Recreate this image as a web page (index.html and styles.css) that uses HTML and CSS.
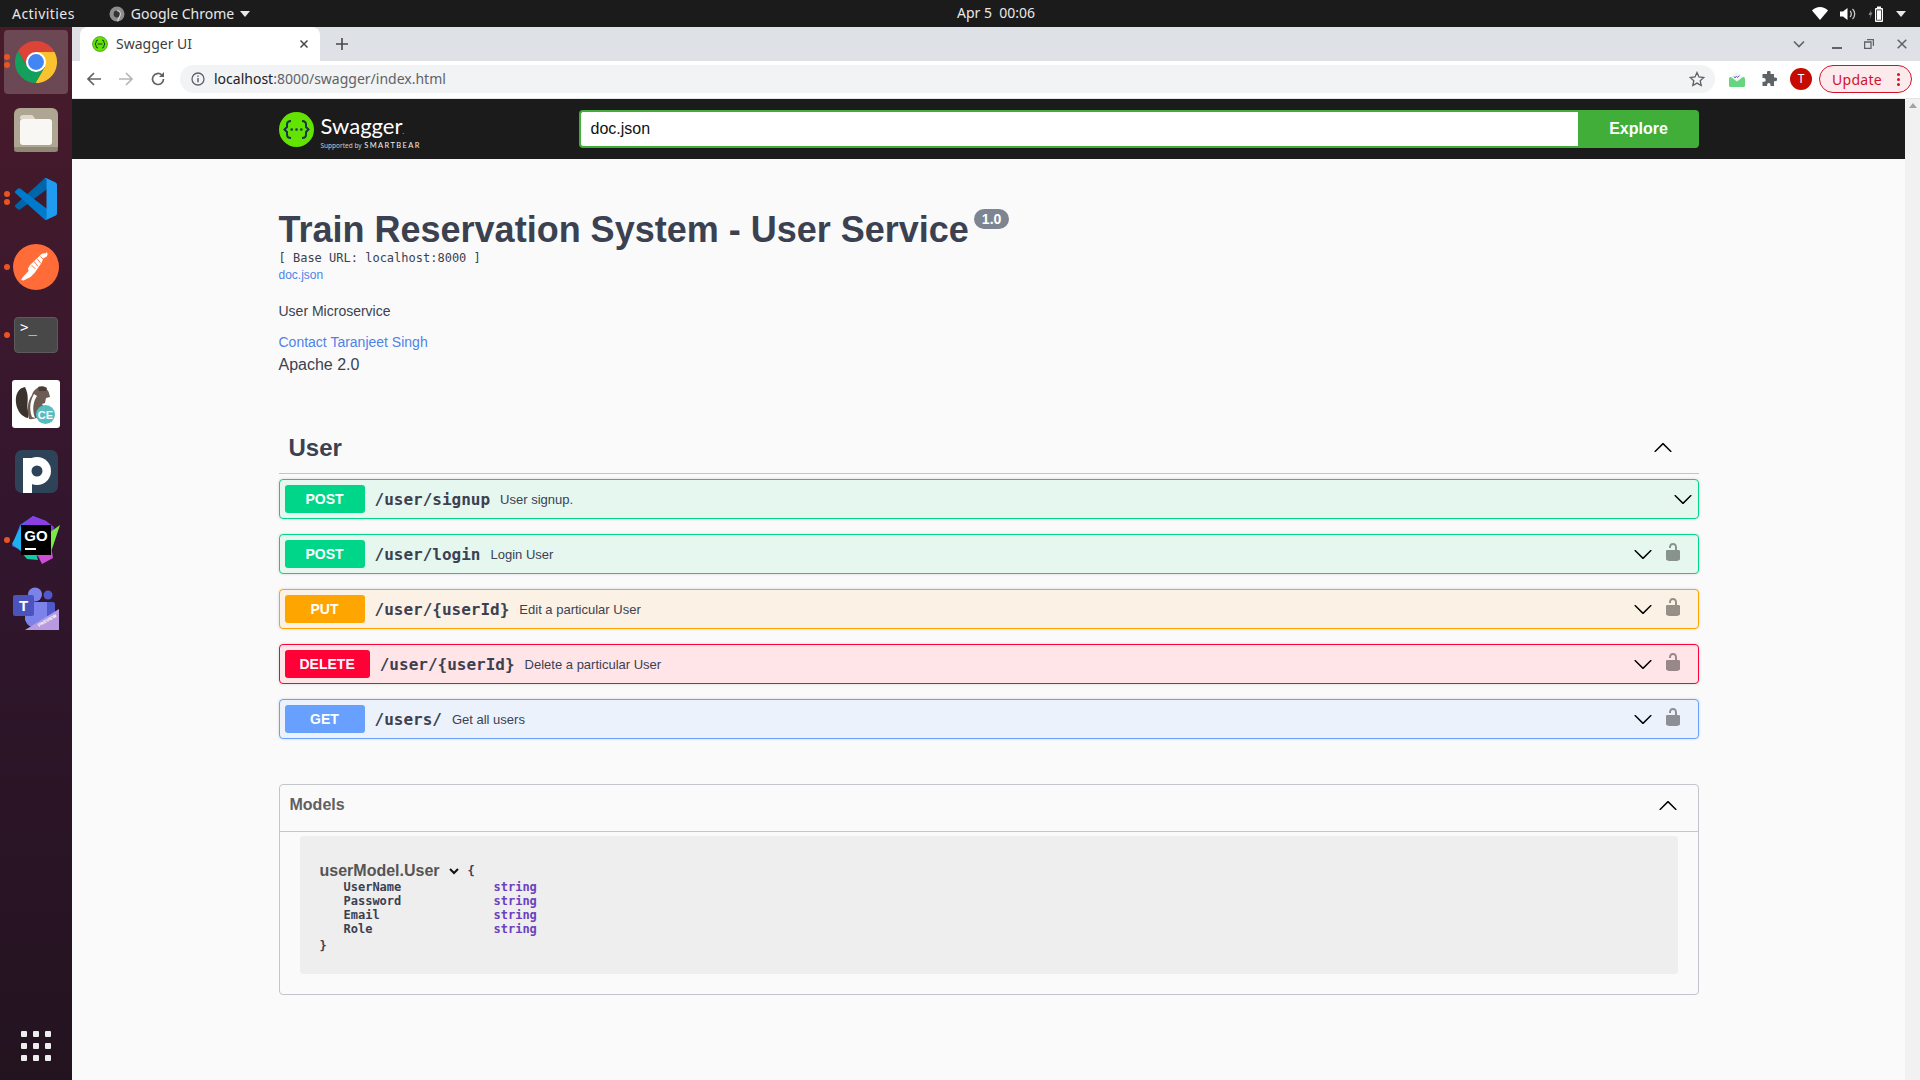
FILE: index.html
```html
<!DOCTYPE html>
<html lang="en">
<head>
  <meta charset="UTF-8">
  <meta name="viewport" content="width=device-width, initial-scale=1.0">
  <title>Swagger UI</title>
  <link rel="stylesheet" href="styles.css">
</head>
<body>
  <div class="gnome-bar">
    <div class="gnome-left">
      <span class="activities">Activities</span>
      <span class="app-menu">
        <svg width="16" height="16" viewBox="0 0 16 16"><circle cx="8" cy="8" r="7.500" fill="#8d8d8d"/><circle cx="8" cy="8" r="3.400" fill="#333"/><path d="M8 4.600A3.400 3.400 0 0 1 11 9.600L8.500 15.200" fill="none" stroke="#d5d5d5" stroke-width="1.200"/></svg>
        <span>Google Chrome</span>
        <i class="tri"></i>
      </span>
    </div>
    <div class="gnome-clock">Apr 5&nbsp; 00:06</div>
    <div class="gnome-right">
      <svg width="16" height="13" viewBox="0 0 16 13"><path d="M0 3.600C2 1.400 5 0 8 0s6 1.400 8 3.600L8 13z" fill="#fff"/></svg>
      <svg width="16" height="14" viewBox="0 0 16 14"><path d="M0 4.500h3L7.500 1v12L3 9.500H0z" fill="#fff"/><path d="M10 4c1 .8 1.300 1.800 1.300 3s-.3 2.200-1.300 3M12.500 2c1.500 1.300 2.200 3 2.200 5s-.7 3.700-2.200 5" fill="none" stroke="#ccc" stroke-width="1.300"/></svg>
      <svg width="16" height="16" viewBox="0 0 16 16"><path d="M3.500 3 .5 9h2L1.500 13l3-6.500h-2z" fill="#888"/><rect x="7" y="2" width="8" height="14" rx="1" fill="#fff"/><rect x="8.200" y="3.500" width="5.600" height="11" fill="#1b1b1b"/><rect x="9" y="4.300" width="4" height="9.500" fill="#fff"/><rect x="9" y="0.500" width="4" height="2" fill="#fff"/></svg>
      <i class="tri"></i>
    </div>
  </div>

  <div class="desktop">
    <nav class="dock">
      <div class="dock-slot is-active">
        <i class="dots two"></i>
        <svg width="46" height="46" viewBox="0 0 48 48">
          <path d="M5.260 12.540A22 22 0 0 1 43.300 13.500H24L14.910 29.250z" fill="#db4437"/>
          <path d="M43.300 13.500A22 22 0 0 1 23.440 45.970L33.090 29.250 24 13.500z" fill="#f9c22e"/>
          <path d="M23.440 45.970A22 22 0 0 1 5.260 12.540L14.910 29.250H33.090z" fill="#12a05c"/>
          <circle cx="24" cy="24" r="10.500" fill="#fff"/><circle cx="24" cy="24" r="8.300" fill="#4285f4"/>
        </svg>
      </div>
      <div class="dock-slot">
        <svg width="44" height="44" viewBox="0 0 44 44">
          <rect width="44" height="44" rx="6" fill="#aea692"/>
          <rect x="0" y="39" width="44" height="5" rx="3" fill="#8f8874"/>
          <path d="M6 10q0-3 3-3h8q2 0 3 2l1 2h-15z" fill="#ddd9cd"/>
          <rect x="6" y="11" width="32" height="26" rx="3" fill="#f8f7f3"/>
        </svg>
      </div>
      <div class="dock-slot">
        <i class="dots two"></i>
        <svg width="42" height="42" viewBox="0 0 100 100">
          <path d="M96.500 10.800 75.900.9a6.200 6.200 0 0 0-7.100 1.200L1.400 63.500a4.200 4.200 0 0 0 0 6.200l5.400 4.900a4.200 4.200 0 0 0 5.300.2L93.200 13.400c2.700-2.100 6.800-.2 6.800 3.300v-.2a6.200 6.200 0 0 0-3.500-5.700z" fill="#0065a9"/>
          <path d="M96.500 89.200 75.900 99.100a6.200 6.200 0 0 1-7.100-1.200L1.400 36.500a4.200 4.200 0 0 1 0-6.200l5.400-4.900a4.200 4.200 0 0 1 5.300-.2l81.100 61.400c2.700 2.100 6.800.2 6.800-3.300v.2a6.200 6.200 0 0 1-3.500 5.700z" fill="#007acc"/>
          <path d="M75.900 99.100a6.200 6.200 0 0 1-7.100-1.200c2.300 2.300 6.200.7 6.200-2.600V4.700c0-3.300-3.900-4.900-6.200-2.600a6.200 6.200 0 0 1 7.100-1.200l20.600 9.900a6.200 6.200 0 0 1 3.500 5.600v67.200a6.200 6.200 0 0 1-3.500 5.600z" fill="#1f9cf0"/>
        </svg>
      </div>
      <div class="dock-slot">
        <i class="dots"></i>
        <svg width="46" height="46" viewBox="0 0 46 46">
          <circle cx="23" cy="23" r="23" fill="#ff6c37"/>
          <path d="M33 9.500c-3-1-5 .5-6.500 2.500L17 21l-2 3.500.5 2.500-6 6.500-1.500 2.500 2.500.5 7-3.500 4-4 7-10 2-5c2.500-.5 4-1.500 4-3.500s-.5-2.300-1.500-2z" fill="#fff"/>
          <path d="M27.500 12.500l5 5M24 14.500l4 5M21 17.500l4 5M18.500 21l4 4" stroke="#ff6c37" stroke-width=".9"/>
        </svg>
      </div>
      <div class="dock-slot">
        <i class="dots"></i>
        <div class="term-icon"><span>&gt;_</span></div>
      </div>
      <div class="dock-slot">
        <svg width="48" height="48" viewBox="0 0 48 48">
          <rect width="48" height="48" rx="3" fill="#fff"/>
          <path d="M13 7C6 8 3 15 4 23s6 14 12 15c1-3 0-6-.5-10-.5-6 2-12-2.500-21z" fill="#3b322e"/>
          <path d="M17 39c-2-8-2-17 3-24 1-4 4-7 8-8 4 0 8 2 9 6l1 4-4 1-1 5-3 1c2 2 3 5 2 9-1 3-10 7-15 6z" fill="#6d5c54"/>
          <path d="M22 14c-4 7-5 15-2 23l3 1c-3-8-2-16 2-22z" fill="#fff"/>
          <path d="M26 7c3-1 6-1 9 1l-1 3-7 0z" fill="#4a3d38"/>
          <circle cx="33.500" cy="34.500" r="9.500" fill="#55bcc0"/>
          <text x="33.500" y="38.500" class="ce-text">CE</text>
        </svg>
      </div>
      <div class="dock-slot">
        <svg width="43" height="43" viewBox="0 0 43 43">
          <rect width="43" height="43" rx="7" fill="#2e4358"/>
          <rect x="8" y="8" width="9" height="35" fill="#fff"/>
          <circle cx="22" cy="21" r="14" fill="#fff"/>
          <circle cx="22" cy="21" r="5.500" fill="#2e4358"/>
        </svg>
      </div>
      <div class="dock-slot">
        <i class="dots"></i>
        <svg width="48" height="48" viewBox="0 0 48 48">
          <path d="M8 9 21 0l13 5 7 13-4 22-14 0L0 30z" fill="#3f6df0"/>
          <path d="M12 8 21 0l13 5 8 6-4 20-18-14z" fill="#8b3fe0"/>
          <path d="M48 9 39 36 30 22z" fill="#7be84a"/>
          <path d="M0 28 9 10l6 30z" fill="#1fb0f0"/>
          <path d="M24 36l15-6 2 12-11 6z" fill="#d04dd8"/>
          <path d="M9 36l14-2 3 10-11-1z" fill="#16c9a0"/>
          <rect x="9" y="9" width="30" height="30" fill="#000"/>
          <text x="24" y="24.500" class="go-text">GO</text>
          <rect x="13" y="32" width="11" height="2" fill="#fff"/>
        </svg>
      </div>
      <div class="dock-slot">
        <svg width="46" height="43" viewBox="0 0 46 43">
          <circle cx="22" cy="7.500" r="7" fill="#7b83eb"/>
          <circle cx="35" cy="8" r="4.500" fill="#5059c9"/>
          <path d="M30 15h10q2 0 2 2v12q0 6-6 6h-6z" fill="#5059c9"/>
          <path d="M12 15h22v16q0 10-10 10-9 0-12-8z" fill="#7b83eb"/>
          <rect y="8" width="21" height="21" rx="2" fill="#4b53bc"/>
          <text x="10.500" y="24" class="teams-text">T</text>
          <path d="M12 43 46 22v21z" fill="#b79ae0"/>
          <text x="26" y="40" class="preview-text" transform="rotate(-30 26 40)">PREVIEW</text>
        </svg>
      </div>
      <div class="dock-grid">
        <i></i><i></i><i></i><i></i><i></i><i></i><i></i><i></i><i></i>
      </div>
    </nav>

    <div class="browser">
      <div class="tab-strip">
        <div class="tab">
          <svg width="16" height="16" viewBox="0 0 16 16"><circle cx="8" cy="8" r="7.500" fill="#62e400" stroke="#2f7d1a" stroke-width=".6"/><path d="M6 4Q4 4 4 6v1L3 8l1 1v1q0 2 2 2M10 4q2 0 2 2v1l1 1-1 1v1q0 2-2 2M5.500 8h5" fill="none" stroke="#173646" stroke-width="1"/></svg>
          <span class="tab-title">Swagger UI</span>
          <svg class="tab-close" width="10" height="10" viewBox="0 0 10 10"><path d="M1.500 1.500l7 7M8.500 1.500l-7 7" stroke="#45474a" stroke-width="1.500"/></svg>
        </div>
        <svg class="new-tab" width="14" height="14" viewBox="0 0 14 14"><path d="M7 1v12M1 7h12" stroke="#45474a" stroke-width="1.600"/></svg>
        <div class="window-btns">
          <svg class="tab-search" width="12" height="8" viewBox="0 0 12 8"><path d="M1 1.500l5 5 5-5" fill="none" stroke="#5f6368" stroke-width="1.600"/></svg>
          <span class="win-min"></span>
          <svg width="10" height="10" viewBox="0 0 10 10"><path d="M3 .6h6.400V7M.6 3h6.400v6.400H.6z" fill="none" stroke="#5f6368" stroke-width="1.300"/></svg>
          <svg width="10" height="10" viewBox="0 0 10 10"><path d="M.7.7l8.600 8.600M9.300.7.7 9.300" stroke="#5f6368" stroke-width="1.500"/></svg>
        </div>
      </div>

      <div class="toolbar">
        <div class="nav-btns">
          <svg width="16" height="16" viewBox="0 0 16 16"><path d="M15 8H2M8 2 2 8l6 6" fill="none" stroke="#5f6368" stroke-width="1.700"/></svg>
          <svg width="16" height="16" viewBox="0 0 16 16"><path d="M1 8h13M8 2l6 6-6 6" fill="none" stroke="#b4b6b9" stroke-width="1.700"/></svg>
          <svg width="16" height="16" viewBox="0 0 16 16"><path d="M13.500 8a5.500 5.500 0 1 1-1.700-4" fill="none" stroke="#5f6368" stroke-width="1.700"/><path d="M14 1v5H9z" fill="#5f6368"/></svg>
        </div>
        <div class="omnibox">
          <svg width="14" height="14" viewBox="0 0 14 14"><circle cx="7" cy="7" r="6" fill="none" stroke="#5f6368" stroke-width="1.300"/><path d="M7 6v4.200M7 3.400v1.400" stroke="#5f6368" stroke-width="1.500"/></svg>
          <span class="url"><b>localhost</b>:8000/swagger/index.html</span>
          <svg class="star" width="16" height="16" viewBox="0 0 16 16"><path d="M8 1.500l2 4.500 4.800.5-3.600 3.200 1 4.800L8 12.100l-4.200 2.400 1-4.800L1.200 6.500 6 6z" fill="none" stroke="#5f6368" stroke-width="1.300"/></svg>
        </div>
        <div class="toolbar-ext">
          <svg width="16" height="16" viewBox="0 0 16 16"><rect y="6" width="16" height="10" rx="1.500" fill="#67d47f"/><path d="M2 6l3-3h1l2-2 2 2h1l3 3-6 4.500z" fill="#eef6f0"/><path d="M5 5.500l1 1.500 1.500-2 1 1.500 2-2" fill="none" stroke="#7b5fd0" stroke-width="1"/></svg>
          <svg width="16" height="16" viewBox="0 0 16 16"><path d="M6 1.500a1.800 1.800 0 0 1 3.600 0V3h3.400v3.400h1.300a1.900 1.900 0 0 1 0 3.800H13V15H9.500v-1.300a1.700 1.700 0 0 0-3.400 0V15H1.500v-4.200h1.300a1.900 1.900 0 0 0 0-3.800H1.500V3H6z" fill="#5f6368"/></svg>
          <span class="avatar">T</span>
        </div>
        <div class="update-pill">
          <span>Update</span>
          <span class="update-dots"><i></i><i></i><i></i></span>
        </div>
      </div>

      <div class="viewport">
        <main class="swagger">
          <header class="sw-topbar">
            <div class="sw-wrap sw-topbar-row">
              <div class="sw-logo">
                <svg width="35" height="35" viewBox="0 0 35 35">
                  <circle cx="17.500" cy="17.500" r="17.500" fill="#62e400"/>
                  <path d="M12 9q-4 0-4 3.500v2.500l-2.500 2.500L8 20v2.500q0 3.500 4 3.500M23 9q4 0 4 3.500v2.500l2.500 2.500L27 20v2.500q0 3.500-4 3.500" fill="none" stroke="#173646" stroke-width="2"/>
                  <circle cx="12.700" cy="17.500" r="1.300" fill="#173646"/><circle cx="17.500" cy="17.500" r="1.300" fill="#173646"/><circle cx="22.300" cy="17.500" r="1.300" fill="#173646"/>
                </svg>
                <div class="sw-logo-text">
                  <span class="sw-logo-name">Swagger<small>.</small></span>
                  <span class="sw-logo-sub">Supported by <b>SMARTBEAR</b></span>
                </div>
              </div>
              <form class="sw-search">
                <div class="sw-input">doc.json</div>
                <div class="sw-explore">Explore</div>
              </form>
            </div>
          </header>

          <div class="sw-wrap">
            <section class="info">
              <h2 class="info-title">Train Reservation System - User Service <span class="version">1.0</span></h2>
              <div class="base-url">[ Base URL: localhost:8000 ]</div>
              <a class="link small-link">doc.json</a>
              <p class="info-desc">User Microservice</p>
              <a class="link contact">Contact Taranjeet Singh</a>
              <div class="license">Apache 2.0</div>
            </section>

            <section class="tag-section">
              <div class="tag-head">
                <h3>User</h3>
                <svg width="20" height="20" viewBox="0 0 20 20" class="flip"><use href="#arrow"/></svg>
              </div>

              <div class="op op-post">
                <span class="method">POST</span>
                <span class="path">/user/signup</span>
                <span class="summary">User signup.</span>
                <svg class="op-arrow" width="20" height="20" viewBox="0 0 20 20"><use href="#arrow"/></svg>
              </div>
              <div class="op op-post">
                <span class="method">POST</span>
                <span class="path">/user/login</span>
                <span class="summary">Login User</span>
                <svg class="op-arrow" width="20" height="20" viewBox="0 0 20 20"><use href="#arrow"/></svg>
                <svg class="op-lock" width="20" height="20" viewBox="0 0 20 20"><use href="#lock"/></svg>
              </div>
              <div class="op op-put">
                <span class="method">PUT</span>
                <span class="path">/user/{userId}</span>
                <span class="summary">Edit a particular User</span>
                <svg class="op-arrow" width="20" height="20" viewBox="0 0 20 20"><use href="#arrow"/></svg>
                <svg class="op-lock" width="20" height="20" viewBox="0 0 20 20"><use href="#lock"/></svg>
              </div>
              <div class="op op-delete">
                <span class="method">DELETE</span>
                <span class="path">/user/{userId}</span>
                <span class="summary">Delete a particular User</span>
                <svg class="op-arrow" width="20" height="20" viewBox="0 0 20 20"><use href="#arrow"/></svg>
                <svg class="op-lock" width="20" height="20" viewBox="0 0 20 20"><use href="#lock"/></svg>
              </div>
              <div class="op op-get">
                <span class="method">GET</span>
                <span class="path">/users/</span>
                <span class="summary">Get all users</span>
                <svg class="op-arrow" width="20" height="20" viewBox="0 0 20 20"><use href="#arrow"/></svg>
                <svg class="op-lock" width="20" height="20" viewBox="0 0 20 20"><use href="#lock"/></svg>
              </div>
            </section>

            <section class="models">
              <div class="models-head">
                <h4>Models</h4>
                <svg width="20" height="20" viewBox="0 0 20 20" class="flip"><use href="#arrow"/></svg>
              </div>
              <div class="model-box">
                <div class="model-title"><span class="model-name">userModel.User</span>
                  <svg width="12" height="12" viewBox="0 0 12 12"><path d="M2 4l4 4 4-4" fill="none" stroke="#111" stroke-width="2"/></svg>
                  <span class="brace">{</span>
                </div>
                <div class="prop"><span class="prop-name">UserName</span><span class="prop-type">string</span></div>
                <div class="prop"><span class="prop-name">Password</span><span class="prop-type">string</span></div>
                <div class="prop"><span class="prop-name">Email</span><span class="prop-type">string</span></div>
                <div class="prop"><span class="prop-name">Role</span><span class="prop-type">string</span></div>
                <div class="brace brace-end">}</div>
              </div>
            </section>
          </div>
        </main>
        <div class="scrollbar"><i></i></div>
      </div>
    </div>
  </div>

  <svg class="sprites" width="0" height="0">
    <symbol id="arrow" viewBox="0 0 20 20"><path d="M17.418 6.109c.272-.268.709-.268.979 0s.271.701 0 .969l-7.908 7.83c-.27.268-.707.268-.979 0l-7.908-7.83c-.27-.268-.27-.701 0-.969.271-.268.709-.268.979 0L10 13.250l7.418-7.141z"/></symbol>
    <symbol id="lock" viewBox="0 0 20 20"><path d="M15.800 8H14V5.600C14 2.703 12.665 1 10 1 7.334 1 6 2.703 6 5.600V6h2v-.801C8 3.754 8.797 3 10 3c1.203 0 2 .754 2 2.199V8H4c-.553 0-1 .646-1 1.199V17c0 .549.428 1.139.951 1.307l1.197.387C5.672 18.861 6.550 19 7.100 19h5.800c.549 0 1.428-.139 1.951-.307l1.196-.387c.524-.167.953-.757.953-1.306V9.199C17 8.646 16.352 8 15.800 8z"/></symbol>
  </svg>
</body>
</html>
```

FILE: styles.css
```css
* { box-sizing: border-box; }
html, body { height: 100%; }
body { margin: 0; display: flex; flex-direction: column; overflow: hidden; background: #fafafa; font-family: "Liberation Sans", Arial, sans-serif; color: #3b4151; }
p, h2, h3, h4 { margin: 0; }

/* gnome shell bar */
.gnome-bar { height: 27px; flex: none; position: relative; display: flex; justify-content: space-between; align-items: center; padding: 0 14px 0 12px; background: #1b1b1b; color: #e8e8e8; font: 14px "Noto Sans", sans-serif; }
.gnome-left { display: flex; align-items: center; gap: 34px; }
.activities { letter-spacing: .45px; }
.app-menu { display: flex; align-items: center; gap: 6px; }
.gnome-clock { position: absolute; left: 957px; top: 3px; }
.gnome-right { display: flex; align-items: center; gap: 12px; }
.tri { width: 0; height: 0; border: 5px solid transparent; border-top: 6px solid #e8e8e8; border-bottom: 0; }

.desktop { flex: 1; display: flex; min-height: 0; }

/* dock */
.dock { width: 72px; flex: none; display: flex; flex-direction: column; padding-top: 1px; background: linear-gradient(#491b2a, #33162e 45%, #23131f); }
.dock-slot { height: 68.300px; flex: none; position: relative; display: flex; align-items: center; justify-content: center; }
.dock-slot svg { flex: none; position: relative; }
.dock-slot.is-active::before { content: ""; position: absolute; left: 4px; right: 4px; top: 2px; bottom: 2px; border-radius: 4px; background: rgba(255, 255, 255, .2); }
.dots { position: absolute; left: 4px; top: 50%; width: 6px; height: 6px; margin-top: -3px; border-radius: 50%; background: #e95420; }
.dots.two { margin-top: -8px; box-shadow: 0 8px 0 #e95420; }
.term-icon { width: 44px; height: 36px; border-radius: 4px; background: #484848; border: 1px solid #5c5c5c; color: #fff; font: 14px/12px "DejaVu Sans Mono", monospace; padding: 3px 0 0 5px; }
.ce-text { font: bold 11px "Liberation Sans", sans-serif; fill: #fff; text-anchor: middle; }
.go-text { font: bold 15px "Liberation Sans", sans-serif; fill: #fff; text-anchor: middle; }
.teams-text { font: bold 15px "Liberation Sans", sans-serif; fill: #fff; text-anchor: middle; }
.preview-text { font: bold 4.500px "Liberation Sans", sans-serif; fill: #fff; }
.dock-grid { margin-top: auto; margin-bottom: 19px; align-self: center; display: grid; grid-template-columns: repeat(3, 6px); gap: 6px; }
.dock-grid i { height: 6px; background: #eee; border-radius: 1px; }

/* chrome frame */
.browser { flex: 1; min-width: 0; display: flex; flex-direction: column; }
.tab-strip { height: 34px; flex: none; display: flex; align-items: center; background: #dee1e6; padding-left: 8px; }
.tab { position: relative; align-self: stretch; width: 240px; display: flex; align-items: center; padding: 0 11px 0 12px; border-radius: 8px 8px 0 0; background: #fff; font: 14px "Noto Sans", sans-serif; color: #3c4043; }
.tab-title { margin: -2px 0 0 8px; flex: 1; }
.new-tab { margin-left: 15px; }
.window-btns { margin-left: auto; display: flex; align-items: center; padding-right: 13px; }
.tab-search { margin-right: 27px; }
.win-min { width: 10px; height: 2px; background: #5f6368; margin: 8px 22px 0 0; }
.window-btns svg:nth-of-type(2) { margin-right: 23px; }

.toolbar { height: 38px; flex: none; display: flex; align-items: center; background: #fff; border-bottom: 1px solid #e3e5e8; padding-bottom: 1px; }
.nav-btns { display: flex; gap: 16px; margin-left: 14px; width: 94px; }
.omnibox { width: 1535px; height: 28px; flex: none; display: flex; align-items: center; padding: 0 10px 0 11px; border-radius: 14px; background: #f1f3f4; font: 14px "Noto Sans", sans-serif; color: #5f6368; }
.url { margin: -2px 0 0 9px; flex: 1; }
.url b { font-weight: 400; color: #202124; }
.toolbar-ext { display: flex; align-items: center; gap: 16px; margin-left: 14px; }
.avatar { width: 22px; height: 22px; border-radius: 50%; background: #c60c00; color: #fff; font: 12px/22px "Noto Sans", sans-serif; text-align: center; margin-left: -3px; }
.update-pill { width: 93px; height: 28px; margin-left: 7px; display: flex; align-items: center; justify-content: space-between; padding: 0 11px 0 12px; border: 1px solid #d3122a; border-radius: 14px; background: #fdeaec; color: #d3122a; font: 14px "Noto Sans", sans-serif; letter-spacing: .3px; }
.update-dots { display: grid; gap: 2px; }
.update-dots i { width: 3px; height: 3px; border-radius: 50%; background: #d3122a; }

.viewport { flex: 1; min-height: 0; display: flex; }
.swagger { flex: 1; min-width: 0; background: #fafafa; }
.scrollbar { width: 15px; flex: none; background: #f1f1f1; padding: 4px 0 0 4px; }
.scrollbar i { display: block; width: 0; height: 0; border: 4px solid transparent; border-bottom: 5px solid #a3a3a3; border-top: 0; }

/* swagger */
.sw-wrap { width: 1420px; margin: 0 auto; }
.sw-topbar { height: 60px; background: #1b1b1b; display: flex; align-items: center; }
.sw-topbar-row { display: flex; align-items: center; }
.sw-logo { display: flex; align-items: center; gap: 7px; width: 300px; color: #fff; }
.sw-logo-text { display: flex; flex-direction: column; padding-top: 4.500px; }
.sw-logo-name { font: 400 22px/26px Lato, sans-serif; }
.sw-logo-name small { font-size: 6px; }
.sw-logo-sub { margin-top: -4.500px; font: 6.500px/9px "Noto Sans", sans-serif; color: #ccc; white-space: nowrap; }
.sw-logo-sub b { font: 7.500px Lato, sans-serif; letter-spacing: 1.400px; color: #eee; margin-left: 1px; }
.sw-search { flex: 1; display: flex; height: 38px; }
.sw-input { flex: 1; border: 2px solid #41ae3a; border-right: 0; border-radius: 4px 0 0 4px; background: #fff; color: #111; font-size: 16px; line-height: 34px; padding-left: 10px; }
.sw-explore { width: 121px; padding-left: 1px; border-radius: 0 4px 4px 0; background: #41ae3a; color: #fff; font-size: 16px; font-weight: bold; line-height: 38px; text-align: center; }

.info { padding-top: 50px; }
.info-title { display: flex; font-size: 36px; line-height: 42px; font-weight: bold; color: #3b4151; }
.version { height: 20px; margin-left: 5px; padding: 0 8px; border-radius: 10px; background: #7d8492; color: #fff; font-size: 14px; line-height: 20px; }
.base-url { font: 12px/14px "DejaVu Sans Mono", monospace; color: #3b4151; }
.link { color: #4f82e8; display: block; }
.small-link { margin-top: 3px; font-size: 12px; line-height: 14px; }
.info-desc { margin-top: 21px; font-size: 14px; line-height: 16px; }
.contact { margin-top: 15px; font-size: 14px; line-height: 16px; }
.license { margin-top: 6px; font-size: 16px; line-height: 18px; }

.tag-section { margin-top: 55px; }
.tag-head { height: 45px; display: flex; align-items: center; justify-content: space-between; padding: 0 26px 6px 10px; border-bottom: 1px solid #c3c4c8; margin-bottom: 5px; }
.tag-head h3 { font-size: 24px; font-weight: bold; }
.flip { transform: rotate(180deg); }
.op { height: 40px; margin-bottom: 15px; display: flex; align-items: center; padding: 0 5px; border: 1px solid; border-radius: 4px; box-shadow: 0 0 3px rgba(0, 0, 0, .15); }
.op-post { border-color: #00d68a; background: #e5f7ef; }
.op-put { border-color: #ffa500; background: #fcf1e5; }
.op-delete { border-color: #ff0037; background: #ffe4e8; }
.op-get { border-color: #68a0ff; background: #ebf2fc; }
.method { min-width: 80px; height: 28px; flex: none; padding: 0 15px; border-radius: 3px; color: #fff; font-size: 14px; font-weight: bold; line-height: 28px; text-align: center; }
.op-post .method { background: #00d68a; }
.op-put .method { background: #ffa500; }
.op-delete .method { background: #ff0037; }
.op-get .method { background: #68a0ff; }
.path { margin-left: 10px; font: bold 16px "DejaVu Sans Mono", monospace; }
.summary { margin-left: 10px; font-size: 13px; flex: 1; }
.op svg { flex: none; }
.op-lock { opacity: .4; margin: -4px 10px 0 10px; }

.models { height: 211px; margin-top: 45px; border: 1px solid #c4c5ca; border-radius: 4px; }
.models-head { height: 47px; display: flex; align-items: center; justify-content: space-between; padding: 0 15px 0 10px; border-bottom: 1px solid #c4c5ca; }
.models-head h4 { font-size: 16px; font-weight: bold; color: #606060; margin-top: -7px; }
.models-head svg { margin: -5px 5px 0 0; }
.model-box { height: 138px; margin: 4px 20px 0; padding: 25px 19px 0 20px; border-radius: 4px; background: #eeeeee; font: bold 12px/14px "DejaVu Sans Mono", monospace; }
.model-title { display: flex; align-items: center; gap: 8px; height: 19px; }
.model-name { font: bold 16px/19px "Liberation Sans", sans-serif; color: #555; }
.prop { display: flex; padding-left: 24px; }
.prop-name { width: 150px; }
.prop-type { color: #6b3fc0; }
.brace-end { margin-top: 3px; }
.sprites { position: absolute; }
```
